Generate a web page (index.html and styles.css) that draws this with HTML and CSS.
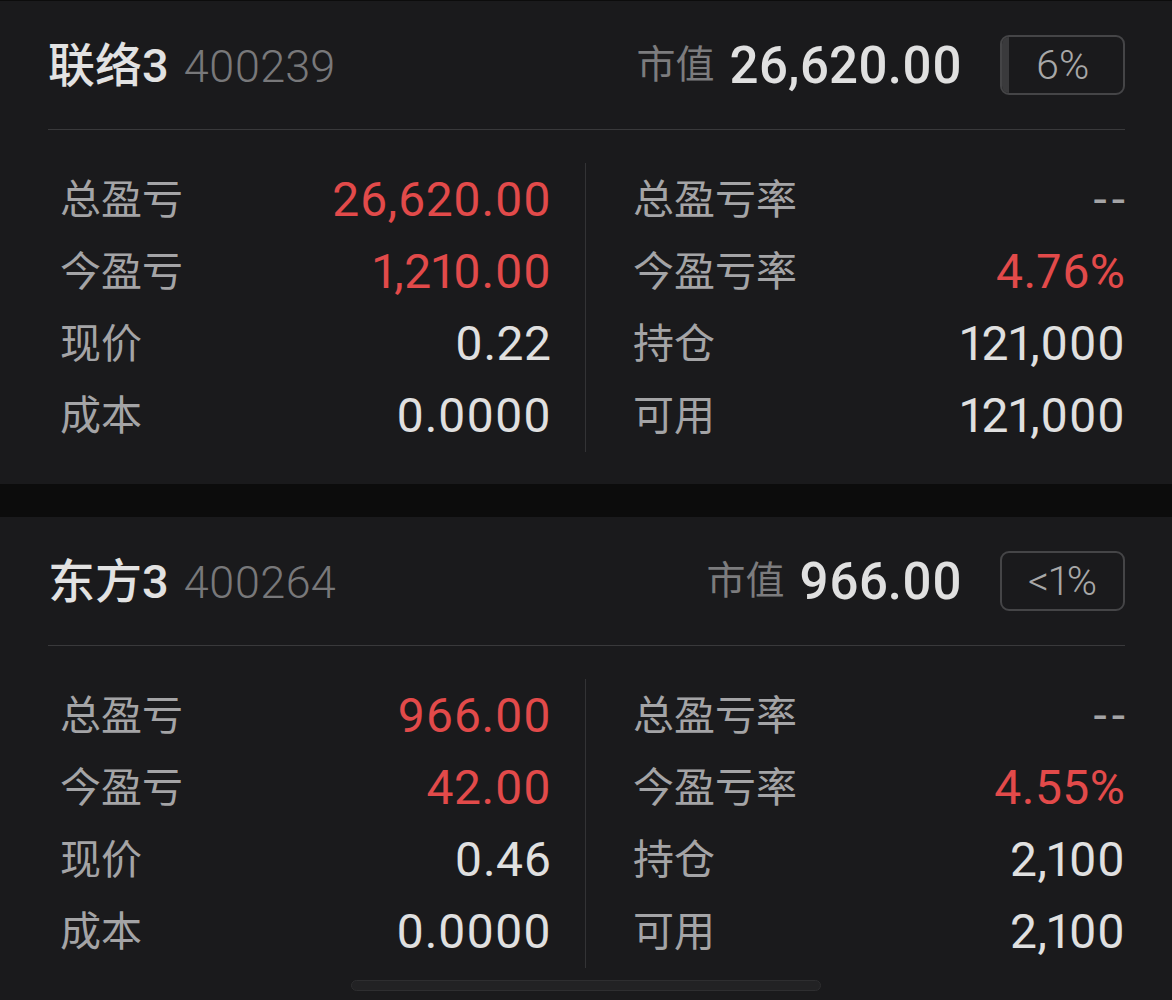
FILE: index.html
```html
<!DOCTYPE html>
<html lang="zh-CN">
<head>
<meta charset="utf-8">
<title>持仓</title>
<link rel="stylesheet" href="styles.css">
</head>
<body>
<div class="list">
  <section class="card">
    <header class="card-head">
      <div class="name"><span class="title">联络3</span><span class="code">400239</span></div>
      <div class="mv">
        <span class="mv-label">市值</span>
        <span class="mv-value">26,620.00</span>
        <span class="badge"><span class="badge-fill" style="width:6%"></span><span class="badge-text">6%</span></span>
      </div>
    </header>
    <div class="stats">
      <div class="col col-left">
        <div class="row"><span class="label">总盈亏</span><span class="val red">26,620.00</span></div>
        <div class="row"><span class="label">今盈亏</span><span class="val red">1,210.00</span></div>
        <div class="row"><span class="label">现价</span><span class="val">0.22</span></div>
        <div class="row"><span class="label">成本</span><span class="val">0.0000</span></div>
      </div>
      <div class="vline"></div>
      <div class="col col-right">
        <div class="row"><span class="label">总盈亏率</span><span class="val dash">--</span></div>
        <div class="row"><span class="label">今盈亏率</span><span class="val red">4.76%</span></div>
        <div class="row"><span class="label">持仓</span><span class="val">121,000</span></div>
        <div class="row"><span class="label">可用</span><span class="val">121,000</span></div>
      </div>
    </div>
  </section>
  <section class="card">
    <header class="card-head">
      <div class="name"><span class="title">东方3</span><span class="code">400264</span></div>
      <div class="mv">
        <span class="mv-label">市值</span>
        <span class="mv-value">966.00</span>
        <span class="badge"><span class="badge-text">&lt;1%</span></span>
      </div>
    </header>
    <div class="stats">
      <div class="col col-left">
        <div class="row"><span class="label">总盈亏</span><span class="val red">966.00</span></div>
        <div class="row"><span class="label">今盈亏</span><span class="val red">42.00</span></div>
        <div class="row"><span class="label">现价</span><span class="val">0.46</span></div>
        <div class="row"><span class="label">成本</span><span class="val">0.0000</span></div>
      </div>
      <div class="vline"></div>
      <div class="col col-right">
        <div class="row"><span class="label">总盈亏率</span><span class="val dash">--</span></div>
        <div class="row"><span class="label">今盈亏率</span><span class="val red">4.55%</span></div>
        <div class="row"><span class="label">持仓</span><span class="val">2,100</span></div>
        <div class="row"><span class="label">可用</span><span class="val">2,100</span></div>
      </div>
    </div>
  </section>
</div>
<div class="home-indicator"></div>
</body>
</html>
```

FILE: styles.css
```css
html, body {
  margin: 0;
  padding: 0;
  background: #0c0c0c;
  overflow: hidden;
}
body {
  font-family: Roboto, "Noto Sans CJK SC", sans-serif;
  color: #dedede;
  padding-top: 1px;
  height: 999px;
  font-variant-numeric: proportional-nums;
}
.list {
  display: flex;
  flex-direction: column;
  gap: 33px;
}
.card {
  background: #1a1a1c;
  padding: 0 47px 32px 48px;
}
.card-head {
  height: 128px;
  border-bottom: 1px solid #39393b;
  display: flex;
  align-items: center;
  justify-content: space-between;
}
.name {
  display: flex;
  align-items: baseline;
}
.title {
  font-size: 47px;
  font-weight: 500;
  color: #e2e2e2;
  line-height: 1;
}
.code {
  font-size: 45px;
  font-weight: 300;
  color: #78787a;
  margin-left: 15px;
  line-height: 1;
}
.mv {
  display: flex;
  align-items: center;
}
.mv-label {
  font-size: 39px;
  color: #7c7c7e;
  line-height: 1;
  margin-right: 15px;
}
.mv-value {
  font-size: 51px;
  font-weight: 500;
  color: #e0e0e0;
  line-height: 1;
}
.badge {
  position: relative;
  margin-left: 38px;
  width: 125px;
  height: 60px;
  box-sizing: border-box;
  border: 2px solid #454547;
  border-radius: 9px;
  display: flex;
  align-items: center;
  justify-content: center;
  overflow: hidden;
}
.badge-fill {
  position: absolute;
  left: 0;
  top: 0;
  bottom: 0;
  background: #3a3a3c;
}
.badge-text {
  position: relative;
  font-size: 41px;
  font-weight: 300;
  color: #a8a8a8;
  line-height: 1;
}
.stats {
  display: flex;
  margin-top: 34px;
  padding-left: 12px;
}
.col {
  display: flex;
  flex-direction: column;
}
.col-left {
  width: 491px;
  margin-right: 34px;
}
.col-right {
  flex: 1;
  margin-left: 47px;
}
.vline {
  width: 1px;
  background: #333335;
  margin-top: -1px;
}
.row {
  height: 72px;
  display: flex;
  align-items: center;
  justify-content: space-between;
}
.label {
  font-size: 41px;
  color: #a4a4a6;
  line-height: 1;
}
.val {
  font-size: 48px;
  letter-spacing: 0.5px;
  margin-right: -0.5px;
  color: #e0e0e0;
  line-height: 1;
}
.val.red {
  color: #e24a4a;
}
.val.dash {
  color: #a4a4a6;
  font-size: 48px;
  letter-spacing: 5px;
  margin-right: -5px;
}
.home-indicator {
  position: fixed;
  left: 351px;
  top: 980px;
  width: 470px;
  height: 11px;
  box-sizing: border-box;
  background: #222224;
  border: 1px solid #2e2e30;
  border-radius: 6px;
}
```
